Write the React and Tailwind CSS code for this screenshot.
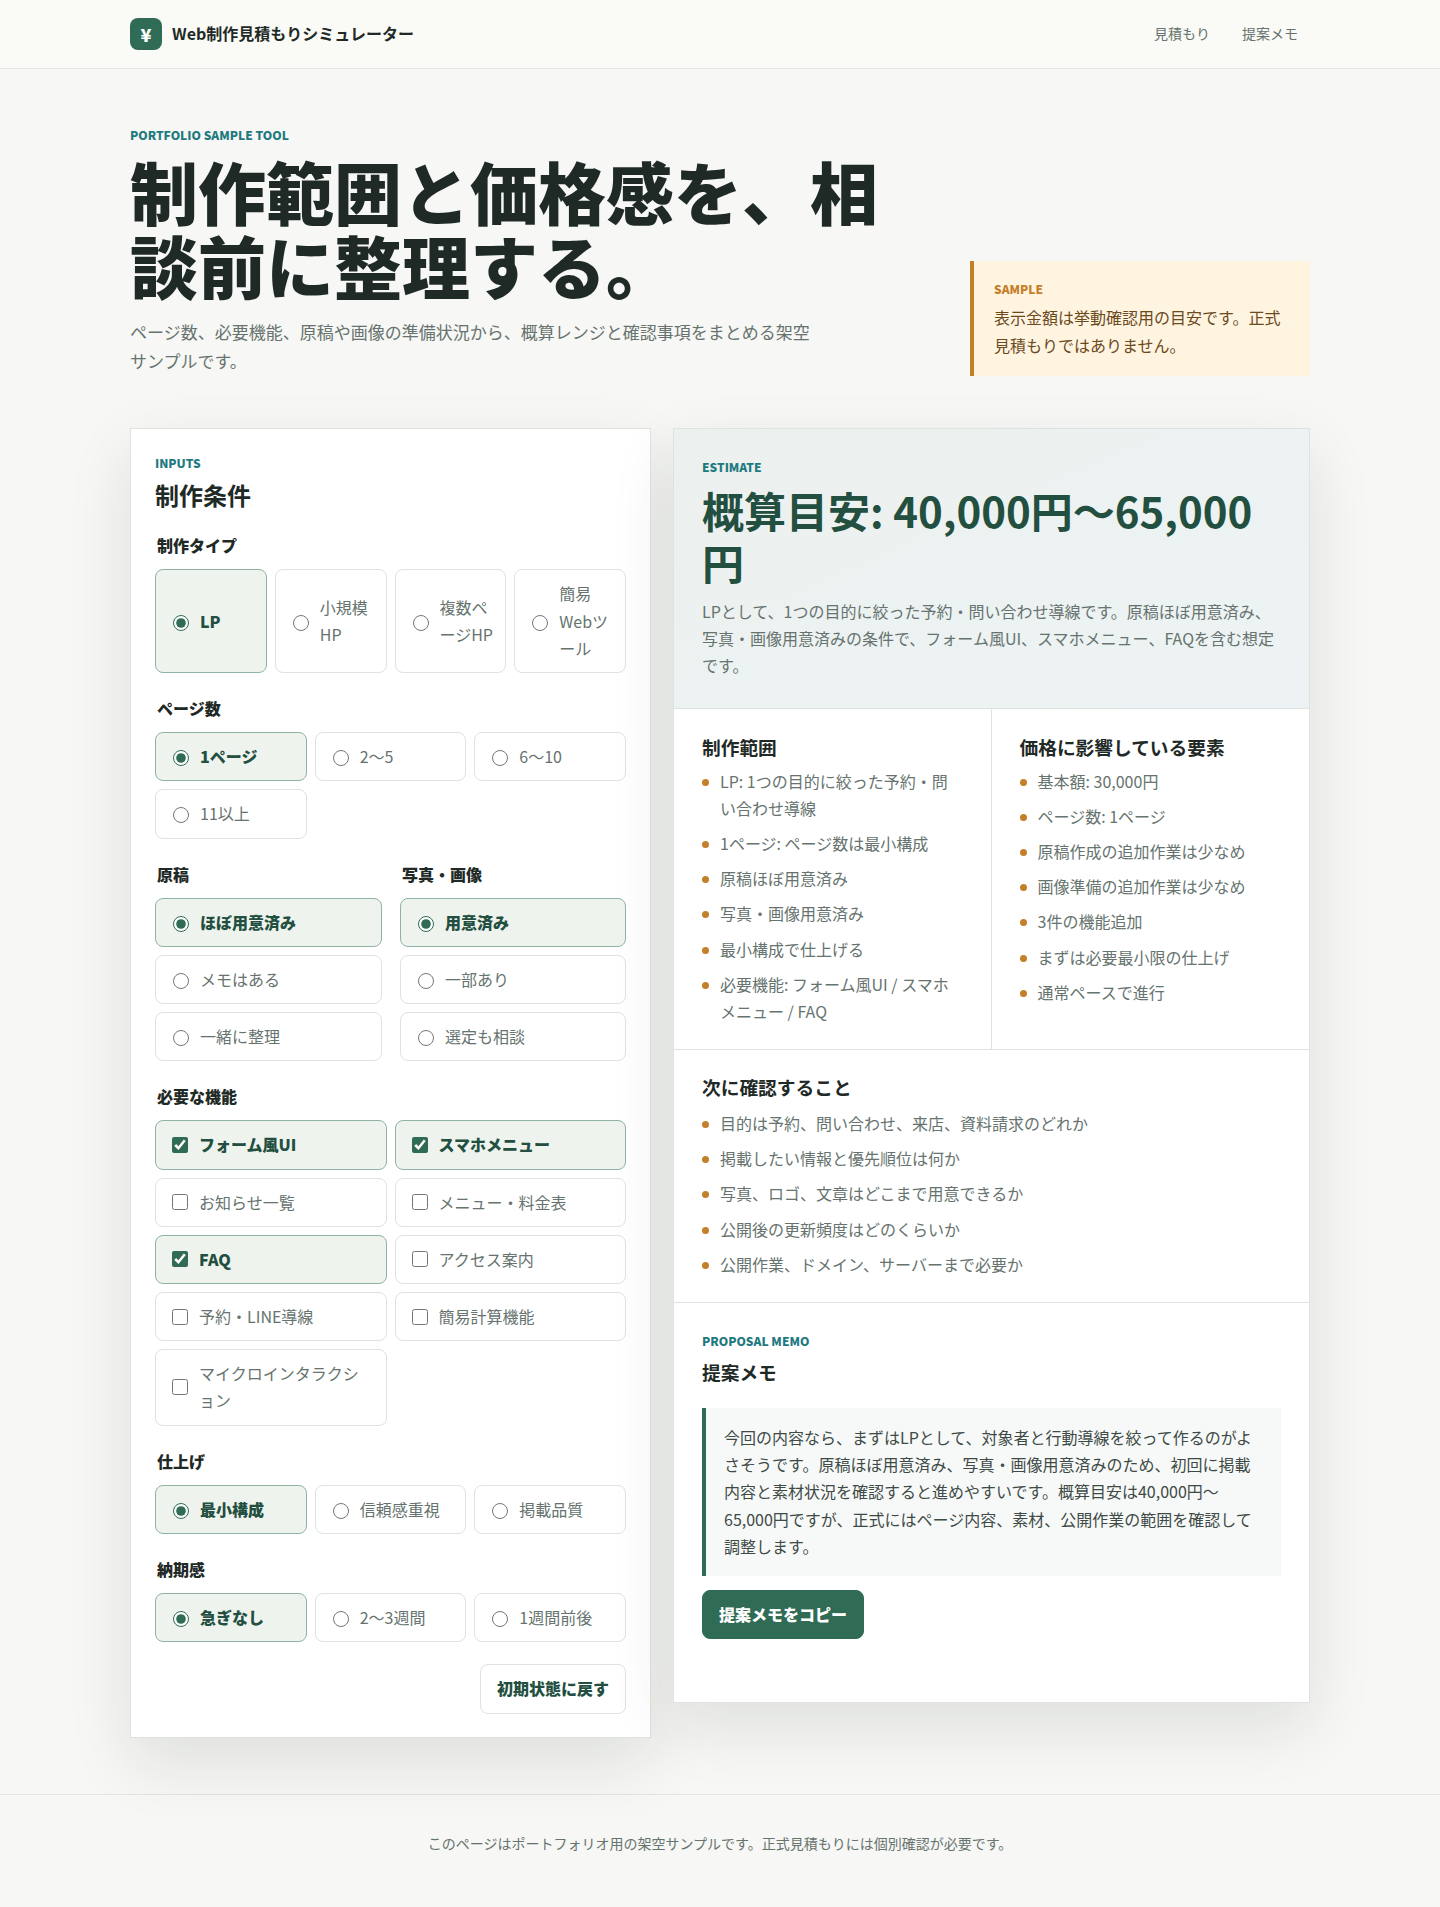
import React from "react";

function Choice({ type = "radio", label, checked = false }) {
  return (
    <label
      className={`flex items-center gap-2 rounded-lg border px-3 py-[10px] ${
        checked
          ? "border-[#8fb3a4] bg-[#eef3ee] font-extrabold text-[#234f40]"
          : "border-[#dde3df] bg-white text-[#66736e]"
      }`}
    >
      {type === "radio" ? (
        <input
          type="radio"
          checked={checked}
          readOnly
          className="ml-[5px] mr-[3px] mt-[3px] size-4 shrink-0 accent-[#2f6b55]"
        />
      ) : (
        <input
          type="checkbox"
          checked={checked}
          readOnly
          className="m-[3px] ml-1 size-4 shrink-0 accent-[#2f6b55]"
        />
      )}
      <span className="min-w-0">{label}</span>
    </label>
  );
}

function Group({ title, className = "mt-[22px]", children }) {
  return (
    <div className={className}>
      <div className="mb-[10px] px-[2px] font-extrabold text-[#1f2a27]">{title}</div>
      {children}
    </div>
  );
}

function Dots({ items, className = "mt-[4.5px]" }) {
  return (
    <ul className={`${className} flex flex-col gap-2 text-[#66736e]`}>
      {items.map((item) => (
        <li key={item} className="relative pl-[18px]">
          <span className="absolute left-0 top-[11px] size-[7px] rounded-full bg-[#c47f2b]" />
          {item}
        </li>
      ))}
    </ul>
  );
}

const eyebrow = "text-[12px] font-extrabold text-[#1f7a80]";
const cardShadow = "shadow-[0_24px_60px_rgba(31,42,38,0.11)]";

export default function App() {
  return (
    <div className="min-h-[1907px] bg-[#f7f7f5] font-['Noto_Sans_CJK_JP','Noto_Sans',sans-serif] text-[16px] leading-[1.7] text-[#1f2a27]">
      <header className="border-b border-[#e1e5e1] bg-[#fafaf6]">
        <div className="mx-auto flex h-[68px] w-[1180px] items-center justify-between">
          <div className="flex items-center gap-[10px] font-bold">
            <span className="flex size-8 items-center justify-center rounded-lg bg-[#2f6b55] text-[18px] font-extrabold text-white">¥</span>
            Web制作見積もりシミュレーター
          </div>
          <nav className="flex gap-2 text-[14px] text-[#66736e]">
            <a className="px-3 py-2">見積もり</a>
            <a className="px-3 py-2">提案メモ</a>
          </nav>
        </div>
      </header>

      <main className="mx-auto w-[1180px]">
        <section className="grid grid-cols-[1fr_340px] items-end gap-10 pb-[52px] pt-14">
          <div>
            <p className={`${eyebrow} mb-[9px]`}>PORTFOLIO SAMPLE TOOL</p>
            <h1 className="text-[68px] font-extrabold leading-[1.08] text-[#1f2a27]">制作範囲と価格感を、相談前に整理する。</h1>
            <p className="mt-[17px] max-w-[690px] text-[17px] text-[#66736e]">
              ページ数、必要機能、原稿や画像の準備状況から、概算レンジと確認事項をまとめる架空サンプルです。
            </p>
          </div>
          <aside className="border-l-4 border-[#c47f2b] bg-[#fff4e0] px-5 pb-[17px] pt-[18px]">
            <p className="text-[12px] font-extrabold text-[#c47f2b]">SAMPLE</p>
            <p className="mt-1 leading-[1.75] text-[#6b4a1e]">表示金額は挙動確認用の目安です。正式見積もりではありません。</p>
          </aside>
        </section>

        <div className="mb-14 grid grid-cols-[521px_1fr] items-start gap-[22px]">
          <section className={`border border-[#dde3df] bg-white px-6 pb-[23px] pt-6 ${cardShadow}`}>
            <p className={eyebrow}>INPUTS</p>
            <h2 className="mt-[2px] text-[24px] font-bold">制作条件</h2>

            <Group title="制作タイプ" className="mt-4">
              <div className="grid grid-cols-4 gap-2">
                <Choice label="LP" checked />
                <Choice label="小規模HP" />
                <Choice label="複数ページHP" />
                <Choice label="簡易Webツール" />
              </div>
            </Group>

            <Group title="ページ数">
              <div className="grid grid-cols-3 gap-2">
                <Choice label="1ページ" checked />
                <Choice label="2〜5" />
                <Choice label="6〜10" />
                <Choice label="11以上" />
              </div>
            </Group>

            <div className="grid grid-cols-[227px_1fr] gap-[18px]">
              <Group title="原稿">
                <div className="flex flex-col gap-2">
                  <Choice label="ほぼ用意済み" checked />
                  <Choice label="メモはある" />
                  <Choice label="一緒に整理" />
                </div>
              </Group>
              <Group title="写真・画像">
                <div className="flex flex-col gap-2">
                  <Choice label="用意済み" checked />
                  <Choice label="一部あり" />
                  <Choice label="選定も相談" />
                </div>
              </Group>
            </div>

            <Group title="必要な機能">
              <div className="grid grid-cols-2 gap-2">
                <Choice type="checkbox" label="フォーム風UI" checked />
                <Choice type="checkbox" label="スマホメニュー" checked />
                <Choice type="checkbox" label="お知らせ一覧" />
                <Choice type="checkbox" label="メニュー・料金表" />
                <Choice type="checkbox" label="FAQ" checked />
                <Choice type="checkbox" label="アクセス案内" />
                <Choice type="checkbox" label="予約・LINE導線" />
                <Choice type="checkbox" label="簡易計算機能" />
                <Choice type="checkbox" label="マイクロインタラクション" />
              </div>
            </Group>

            <Group title="仕上げ">
              <div className="grid grid-cols-3 gap-2">
                <Choice label="最小構成" checked />
                <Choice label="信頼感重視" />
                <Choice label="掲載品質" />
              </div>
            </Group>

            <Group title="納期感">
              <div className="grid grid-cols-3 gap-2">
                <Choice label="急ぎなし" checked />
                <Choice label="2〜3週間" />
                <Choice label="1週間前後" />
              </div>
            </Group>

            <div className="mt-[22px] flex justify-end">
              <button className="rounded-lg border border-[#dde3df] bg-white px-4 py-[10px] font-extrabold text-[#234f40]">
                初期状態に戻す
              </button>
            </div>
          </section>

          <section className={`border border-[#dde3df] bg-white ${cardShadow}`}>
            <div className="border-b border-[#dde3df] bg-linear-to-br from-[#ecf1ef] to-[#edf2f4] px-7 pb-[29px] pt-7">
              <p className={eyebrow}>ESTIMATE</p>
              <h2 className="mt-[7px] text-[42px] font-bold leading-[1.23] text-[#234f40]">概算目安: 40,000円〜65,000円</h2>
              <p className="mt-[10px] text-[#66736e]">
                LPとして、1つの目的に絞った予約・問い合わせ導線です。原稿ほぼ用意済み、写真・画像用意済みの条件で、フォーム風UI、スマホメニュー、FAQを含む想定です。
              </p>
            </div>

            <div className="grid grid-cols-2 border-b border-[#dde3df]">
              <div className="border-r border-[#dde3df] px-7 pb-6 pt-[22px]">
                <h3 className="text-[18.72px] font-bold">制作範囲</h3>
                <Dots
                  items={[
                    "LP: 1つの目的に絞った予約・問い合わせ導線",
                    "1ページ: ページ数は最小構成",
                    "原稿ほぼ用意済み",
                    "写真・画像用意済み",
                    "最小構成で仕上げる",
                    "必要機能: フォーム風UI / スマホメニュー / FAQ",
                  ]}
                />
              </div>
              <div className="px-7 pb-6 pt-[22px]">
                <h3 className="text-[18.72px] font-bold">価格に影響している要素</h3>
                <Dots
                  items={[
                    "基本額: 30,000円",
                    "ページ数: 1ページ",
                    "原稿作成の追加作業は少なめ",
                    "画像準備の追加作業は少なめ",
                    "3件の機能追加",
                    "まずは必要最小限の仕上げ",
                    "通常ペースで進行",
                  ]}
                />
              </div>
            </div>

            <div className="border-b border-[#dde3df] px-7 pb-6 pt-[21px]">
              <h3 className="text-[18.72px] font-bold">次に確認すること</h3>
              <Dots
                className="mt-[7px]"
                items={[
                  "目的は予約、問い合わせ、来店、資料請求のどれか",
                  "掲載したい情報と優先順位は何か",
                  "写真、ロゴ、文章はどこまで用意できるか",
                  "公開後の更新頻度はどのくらいか",
                  "公開作業、ドメイン、サーバーまで必要か",
                ]}
              />
            </div>

            <div className="px-7 pb-[63px] pt-7">
              <p className={eyebrow}>PROPOSAL MEMO</p>
              <h3 className="mt-[5px] text-[18.72px] font-bold">提案メモ</h3>
              <p className="mt-5 border-l-4 border-[#2f6b55] bg-[#f7f9f8] px-[18px] py-4 text-[#3e4a46]">
                今回の内容なら、まずはLPとして、対象者と行動導線を絞って作るのがよさそうです。原稿ほぼ用意済み、写真・画像用意済みのため、初回に掲載内容と素材状況を確認すると進めやすいです。概算目安は40,000円〜65,000円ですが、正式にはページ内容、素材、公開作業の範囲を確認して調整します。
              </p>
              <button className="mt-[14px] rounded-lg border border-[#2f6b55] bg-[#2f6b55] px-4 py-[10px] font-extrabold text-white">
                提案メモをコピー
              </button>
            </div>
          </section>
        </div>
      </main>

      <footer className="border-t border-[#e1e5e1] pb-[52px] pt-[37px] text-center text-[14px] text-[#66736e]">
        このページはポートフォリオ用の架空サンプルです。正式見積もりには個別確認が必要です。
      </footer>
    </div>
  );
}
